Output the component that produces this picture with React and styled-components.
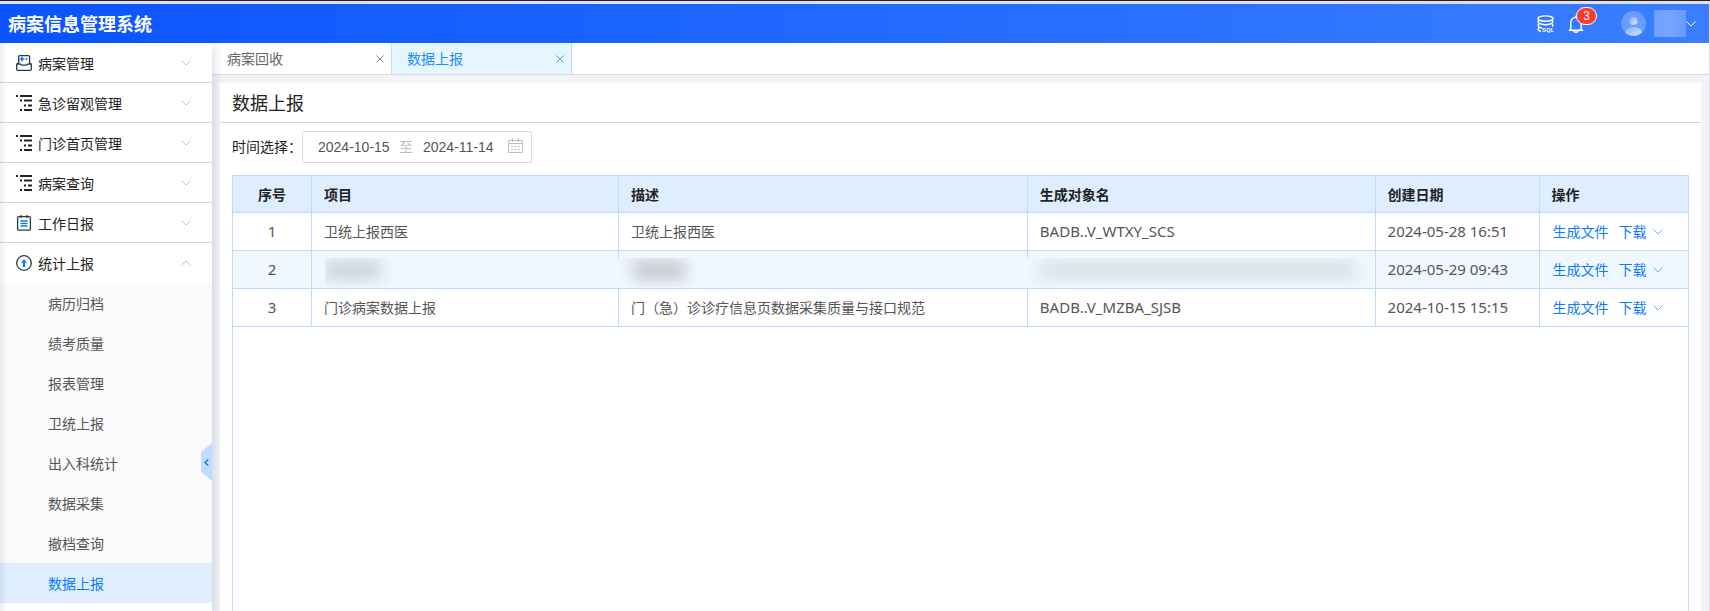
import React, { useState } from "react";
import styled, { createGlobalStyle } from "styled-components";

const GlobalStyle = createGlobalStyle`
  * {
    box-sizing: border-box;
  }

  body {
    margin: 0;
    font-family: "Noto Sans", "Noto Sans CJK SC", sans-serif;
    font-size: 14px;
    line-height: 20px;
    color: #222;
    background-color: #f3f4f6;
  }

  button,
  input {
    font: inherit;
    color: inherit;
    margin: 0;
    padding: 0;
    border: none;
    background: none;
  }

  button {
    cursor: pointer;
  }
`;

const Page = styled.div`
  display: flex;
  flex-direction: column;
  min-height: 100vh;
  border-right: 1px solid #dcdfee;
`;

const TopEdge = styled.div`
  height: 4px;
  margin-right: -1px;
  border-top: 1px solid #23232d;
  background-color: #dfe1ee;
`;

const Header = styled.header`
  display: flex;
  align-items: center;
  justify-content: space-between;
  height: 39px;
  padding: 0 13px 0 8px;
  color: #fff;
  background: linear-gradient(90deg, #0a54ff, #3a7eff);
`;

const Brand = styled.h1`
  margin: 0;
  font-size: 18px;
  font-weight: 700;
  line-height: 24px;
`;

const HeaderTools = styled.div`
  display: flex;
  align-items: center;
  gap: 14px;
`;

const IconButton = styled.button`
  position: relative;
  display: flex;
`;

const Badge = styled.span`
  position: absolute;
  top: -8px;
  left: 8px;
  width: 21px;
  height: 18px;
  border: 1px solid #fff;
  border-radius: 9px;
  background-color: #ff3830;
  font-family: "Liberation Sans", sans-serif;
  font-size: 12px;
  line-height: 17px;
  text-align: center;
`;

const UserButton = styled.button`
  display: flex;
  align-items: center;
  margin-left: 23px;
`;

const UserName = styled.span`
  width: 32px;
  height: 27px;
  margin-left: 8px;
  background: linear-gradient(90deg, #6f9fff, #79a4ff 50%, #659aff);
`;

const Body = styled.div`
  display: flex;
  flex: 1;
`;

const Sidebar = styled.nav`
  position: relative;
  z-index: 1;
  flex: none;
  width: 212px;
  background-color: #fff;
  box-shadow: 2px 4px 10px rgba(20, 50, 110, 0.18);
`;

const EdgeShade = styled.div`
  position: absolute;
  top: 0;
  bottom: 0;
  left: 0;
  width: 7px;
  pointer-events: none;
  background: linear-gradient(90deg, rgba(20, 50, 110, 0.08), transparent);
`;

const MenuItem = styled.button`
  display: flex;
  align-items: center;
  width: 100%;
  height: 40px;
  padding: 0 21px 0 16px;
  border-bottom: 1px solid ${({ $open }) => ($open ? "transparent" : "#d9d9d9")};
  color: #222;
  text-align: left;
`;

const MenuLabel = styled.span`
  flex: 1;
  padding: 2px 0 0 6px;
`;

const SubMenu = styled.ul`
  margin: 0;
  padding: 0;
  list-style: none;
  background-color: #fafafa;
`;

const SubLink = styled.a`
  display: block;
  height: 40px;
  padding-left: 48px;
  line-height: 42px;
  text-decoration: none;
  color: ${({ $active }) => ($active ? "#0a7cff" : "#555")};
  background-color: ${({ $active }) => ($active ? "#deeeff" : "transparent")};
`;

const CollapseHandle = styled.button`
  position: absolute;
  top: 400px;
  right: 0;
  display: flex;
  align-items: center;
  justify-content: center;
  width: 11px;
  height: 38px;
  color: #0a7cff;
  background-color: #bfdeff;
  clip-path: polygon(100% 0, 100% 100%, 0 76%, 0 24%);
`;

const Main = styled.main`
  display: flex;
  flex: 1;
  flex-direction: column;
  min-width: 0;
`;

const Tabs = styled.div`
  display: flex;
  height: 32px;
  border-bottom: 1px solid #d8dce8;
  background-color: #fff;
`;

const Tab = styled.div`
  display: flex;
  align-items: center;
  justify-content: space-between;
  width: 180px;
  padding: 0 7px 0 15px;
  border-right: 1px solid #d0dae8;
  color: ${({ $active }) => ($active ? "#1c8cff" : "#666")};
  background-color: ${({ $active }) => ($active ? "#e6f6ff" : "#fff")};
`;

const CloseButton = styled.button`
  display: flex;
  opacity: 0.8;
`;

const Panel = styled.section`
  position: relative;
  z-index: 2;
  display: flex;
  flex: 1;
  flex-direction: column;
  margin: 8px 8px 0;
  background-color: #fff;
`;

const PanelTitle = styled.h2`
  margin: 0;
  height: 40px;
  padding-left: 12px;
  border-bottom: 1px solid #d9d9d9;
  font-size: 18px;
  font-weight: 400;
  line-height: 40px;
`;

const Filter = styled.form`
  display: flex;
  align-items: center;
  padding: 8px 12px 12px;
`;

const RangePicker = styled.div`
  display: flex;
  align-items: center;
  width: 230px;
  height: 32px;
  padding: 0 8px 0 15px;
  border: 1px solid #d9d9d9;
  border-radius: 2px;
`;

const DateInput = styled.input`
  width: 76px;
  color: #555;
  font-family: "Liberation Sans", sans-serif;
`;

const RangeSeparator = styled.span`
  width: 14px;
  margin: 0 10px 0 5px;
  color: #bfbfbf;
`;

const PickerIcon = styled.span`
  display: flex;
  margin-left: 9px;
  padding-bottom: 3px;
  color: #bfbfbf;
`;

const TableBox = styled.div`
  flex: 1;
  margin: 0 12px;
  border: 1px solid #bcdcff;
  border-bottom: none;
`;

const Table = styled.table`
  width: 100%;
  table-layout: fixed;
  border-collapse: separate;
  border-spacing: 0;
`;

const Th = styled.th`
  height: 37px;
  padding: 2px 12px 0;
  border-right: 1px solid #bcdcff;
  border-bottom: 1px solid #bcdcff;
  text-align: ${({ $center }) => ($center ? "center" : "left")};
  font-weight: 700;
  background-color: #deeeff;

  &:last-child {
    border-right: none;
  }
`;

const Td = styled.td`
  position: relative;
  height: 38px;
  padding: 0 12px;
  border-right: 1px solid #bcdcff;
  border-bottom: 1px solid #bcdcff;
  text-align: ${({ $center }) => ($center ? "center" : "left")};
  color: #555;
  background-color: ${({ $striped }) => ($striped ? "#f0f7ff" : "#fff")};

  &:last-child {
    border-right: none;
  }
`;

const Latin = styled.span`
  font-size: 15px;
`;

const Mask = styled.div`
  position: absolute;
  top: 7px;
  right: ${({ $last }) => ($last ? "0" : "-1px")};
  bottom: 1px;
  left: ${({ $first }) => ($first ? "13px" : "0")};
  overflow: hidden;
  background-color: #f0f7ff;
`;

const Smudge = styled.div`
  width: ${({ $width }) => $width};
  height: 18px;
  margin: 3px 0 0 ${({ $left }) => $left};
  background-color: ${({ $color }) => $color};
  filter: blur(8px);
`;

const Actions = styled.div`
  display: flex;
  align-items: center;
  gap: 10px;
  padding-left: 1px;
`;

const ActionButton = styled.button`
  display: flex;
  align-items: center;
  gap: 6px;
  color: #0a7cff;
  white-space: nowrap;
`;

const Chevron = ({ up, color = "currentColor" }) => (
  <svg width="10" height="6" viewBox="0 0 10 6" fill="none" stroke={color}>
    <path d={up ? "M.5 5.5 5 1l4.5 4.5" : "M.5.5 5 5 9.5.5"} />
  </svg>
);

const SqlIcon = () => (
  <svg width="17" height="18" viewBox="0 0 17 18" fill="none" stroke="#fff" strokeWidth="1.4">
    <ellipse cx="8.5" cy="3.6" rx="7.6" ry="2.7" />
    <path d="M2 5.2C-.4 7 2 9.700 8.500 9.700S17 7 15 5.200" />
    <path d="M2 9C.2 10.800 1.800 12.600 5 13M15 9c1 1 1 1.800.4 2.600M2 12.600c-1.600 1.600-.8 3.200 2 3.700" />
    <text
      x="5"
      y="17"
      fill="#fff"
      stroke="none"
      fontFamily="Liberation Sans, sans-serif"
      fontSize="6"
      fontWeight="700"
    >
      SQL
    </text>
  </svg>
);

const BellIcon = () => (
  <svg width="16" height="18" viewBox="0 0 16 18" fill="none" stroke="#fff" strokeWidth="1.4">
    <path d="M.8 15.200h14.400M2.800 15V7.500a5.200 5.200 0 0 1 10.400 0V15M8 2.300V.6M5.600 15.600c.3 2.200 4.500 2.200 4.800 0" />
  </svg>
);

const Avatar = () => (
  <svg width="25" height="25" viewBox="0 0 25 25">
    <defs>
      <clipPath id="avatar">
        <circle cx="12.5" cy="12.5" r="12.5" />
      </clipPath>
      <linearGradient id="person" x1="0" y1="0" x2="1" y2="1">
        <stop offset="0" stopColor="#8db4ff" />
        <stop offset="1" stopColor="#d5e3ff" />
      </linearGradient>
    </defs>
    <g clipPath="url(#avatar)">
      <rect width="25" height="25" fill="#6b9cff" />
      <circle cx="12.5" cy="10" r="4" fill="url(#person)" />
      <ellipse cx="12.5" cy="22" rx="8.5" ry="6" fill="url(#person)" />
    </g>
  </svg>
);

const RecordIcon = () => (
  <svg width="16" height="16" viewBox="0 0 16 16" fill="none" stroke="#2b3a52" strokeWidth="1.3">
    <path d="M2.700 9V1.700q0-1 1-1h8.900q1 0 1 1V9" />
    <path d="M2.700 8.500H1.600Q.7 8.500.7 9.500v4.800q0 1 1 1h12.600q1 0 1-1V9.500q0-1-1-1h-.7M.7 9.200h3.600l1.200 1h5l1.200-1h3.600" />
    <path stroke="#0a7cff" strokeWidth="1.6" d="M3.800 4h4.400M6 1.800v4.400" />
    <path d="M9.500 4h2" />
  </svg>
);

const TreeIcon = () => (
  <svg width="16" height="16" viewBox="0 0 16 16" fill="#222">
    <path d="M0 0h2v2H0zM4 0h12v2H4zM4 4.500h2v2H4zM8 4.500h8v2H8zM8 9.500h2v2H8zM12 9.500h4v2h-4zM4 14h2v2H4zM8 14h8v2H8z" />
  </svg>
);

const ReportIcon = () => (
  <svg width="16" height="16" viewBox="0 0 16 16" fill="none" stroke="#2b3a52" strokeWidth="1.3">
    <rect x="1.6" y="1.6" width="12.8" height="13.6" rx="1" />
    <path d="M5 0v3M11 0v3" />
    <path stroke="#0a7cff" strokeWidth="1.4" d="M4.500 6h7M4.500 8.500h7M4.500 11h7" />
  </svg>
);

const UploadIcon = () => (
  <svg width="16" height="16" viewBox="0 0 16 16" fill="none" stroke="#2b3a52" strokeWidth="1.3">
    <circle cx="8" cy="8" r="7.3" />
    <path stroke="#0a7cff" strokeWidth="2" d="M8 12V5.500" />
    <path fill="#0a7cff" stroke="none" d="m8 4.200 3 3.300H5z" />
  </svg>
);

const CalendarIcon = () => (
  <svg width="15" height="15" viewBox="0 0 15 15" fill="none" stroke="currentColor">
    <path d="M.5 2.500h14v12H.5zM.5 5.500h14M4.500 0v4M10.500 0v4M3 8.500h2M6.500 8.500h2M10 8.500h2M3 11.500h2M6.500 11.500h2M10 11.500h2" />
  </svg>
);

const CloseIcon = () => (
  <svg width="8" height="8" viewBox="0 0 8 8" stroke="currentColor">
    <path d="m.5.5 7 7M7.500.5l-7 7" />
  </svg>
);

const menu = [
  { label: "病案管理", icon: RecordIcon },
  { label: "急诊留观管理", icon: TreeIcon },
  { label: "门诊首页管理", icon: TreeIcon },
  { label: "病案查询", icon: TreeIcon },
  { label: "工作日报", icon: ReportIcon },
  {
    label: "统计上报",
    icon: UploadIcon,
    children: [
      "病历归档",
      "绩考质量",
      "报表管理",
      "卫统上报",
      "出入科统计",
      "数据采集",
      "撤档查询",
      "数据上报",
    ],
  },
];

const tabs = ["病案回收", "数据上报"];

const columns = [
  { title: "序号", width: "79px", center: true },
  { title: "项目", width: "21.1%" },
  { title: "描述", width: "28.1%" },
  { title: "生成对象名", width: "23.9%" },
  { title: "创建日期", width: "164px" },
  { title: "操作" },
];

const rows = [
  {
    id: 1,
    name: "卫统上报西医",
    desc: "卫统上报西医",
    target: "BADB..V_WTXY_SCS",
    created: "2024-05-28 16:51",
  },
  { id: 2, masked: true, created: "2024-05-29 09:43" },
  {
    id: 3,
    name: "门诊病案数据上报",
    desc: "门（急）诊诊疗信息页数据采集质量与接口规范",
    target: "BADB..V_MZBA_SJSB",
    created: "2024-10-15 15:15",
  },
];

const App = () => {
  const [current, setCurrent] = useState("数据上报");
  const [from, setFrom] = useState("2024-10-15");
  const [to, setTo] = useState("2024-11-14");

  return (
    <Page>
      <GlobalStyle />
      <TopEdge />
      <Header>
        <Brand>病案信息管理系统</Brand>
        <HeaderTools>
          <IconButton aria-label="SQL">
            <SqlIcon />
          </IconButton>
          <IconButton aria-label="消息">
            <BellIcon />
            <Badge>3</Badge>
          </IconButton>
          <UserButton aria-label="用户">
            <Avatar />
            <UserName />
            <Chevron />
          </UserButton>
        </HeaderTools>
      </Header>
      <Body>
        <Sidebar>
          {menu.map(({ label, icon: Icon, children }) => (
            <React.Fragment key={label}>
              <MenuItem $open={!!children} aria-expanded={!!children}>
                <Icon />
                <MenuLabel>{label}</MenuLabel>
                <Chevron up={!!children} color="#c4c4c4" />
              </MenuItem>
              {children && (
                <SubMenu>
                  {children.map((child) => (
                    <li key={child}>
                      <SubLink
                        href="#"
                        $active={child === current}
                        onClick={() => setCurrent(child)}
                      >
                        {child}
                      </SubLink>
                    </li>
                  ))}
                </SubMenu>
              )}
            </React.Fragment>
          ))}
          <EdgeShade />
          <CollapseHandle aria-label="收起菜单">
            <svg width="5" height="7" viewBox="0 0 5 7" fill="none" stroke="currentColor" strokeWidth="1.5">
              <path d="M4.300.5 1 3.500l3.300 3" />
            </svg>
          </CollapseHandle>
        </Sidebar>
        <Main>
          <Tabs>
            {tabs.map((tab) => (
              <Tab key={tab} $active={tab === "数据上报"}>
                {tab}
                <CloseButton aria-label="关闭">
                  <CloseIcon />
                </CloseButton>
              </Tab>
            ))}
          </Tabs>
          <Panel>
            <PanelTitle>数据上报</PanelTitle>
            <Filter>
              <label htmlFor="from">时间选择：</label>
              <RangePicker>
                <DateInput id="from" value={from} onChange={(e) => setFrom(e.target.value)} />
                <RangeSeparator>至</RangeSeparator>
                <DateInput
                  aria-label="结束日期"
                  value={to}
                  onChange={(e) => setTo(e.target.value)}
                />
                <PickerIcon>
                  <CalendarIcon />
                </PickerIcon>
              </RangePicker>
            </Filter>
            <TableBox>
              <Table>
                <colgroup>
                  {columns.map(({ title, width }) => (
                    <col key={title} width={width} />
                  ))}
                </colgroup>
                <thead>
                  <tr>
                    {columns.map(({ title, center }) => (
                      <Th key={title} $center={center}>
                        {title}
                      </Th>
                    ))}
                  </tr>
                </thead>
                <tbody>
                  {rows.map(({ id, name, desc, target, created, masked }) => (
                    <tr key={id}>
                      <Td $center $striped={masked}>
                        <Latin>{id}</Latin>
                      </Td>
                      <Td $striped={masked}>
                        {name}
                        {masked && (
                          <Mask $first>
                            <Smudge $left="0" $width="56px" $color="#c8cfd9" />
                          </Mask>
                        )}
                      </Td>
                      <Td $striped={masked}>
                        {desc}
                        {masked && (
                          <Mask>
                            <Smudge $left="14px" $width="52px" $color="#bfc3cd" />
                          </Mask>
                        )}
                      </Td>
                      <Td $striped={masked}>
                        <Latin>{target}</Latin>
                        {masked && (
                          <Mask $last>
                            <Smudge $left="12px" $width="316px" $color="#d8dfe8" />
                          </Mask>
                        )}
                      </Td>
                      <Td $striped={masked}>
                        <Latin>{created}</Latin>
                      </Td>
                      <Td $striped={masked}>
                        <Actions>
                          <ActionButton>生成文件</ActionButton>
                          <ActionButton>
                            下载
                            <Chevron color="#6eaeff" />
                          </ActionButton>
                        </Actions>
                      </Td>
                    </tr>
                  ))}
                </tbody>
              </Table>
            </TableBox>
          </Panel>
        </Main>
      </Body>
    </Page>
  );
};

export default App;
